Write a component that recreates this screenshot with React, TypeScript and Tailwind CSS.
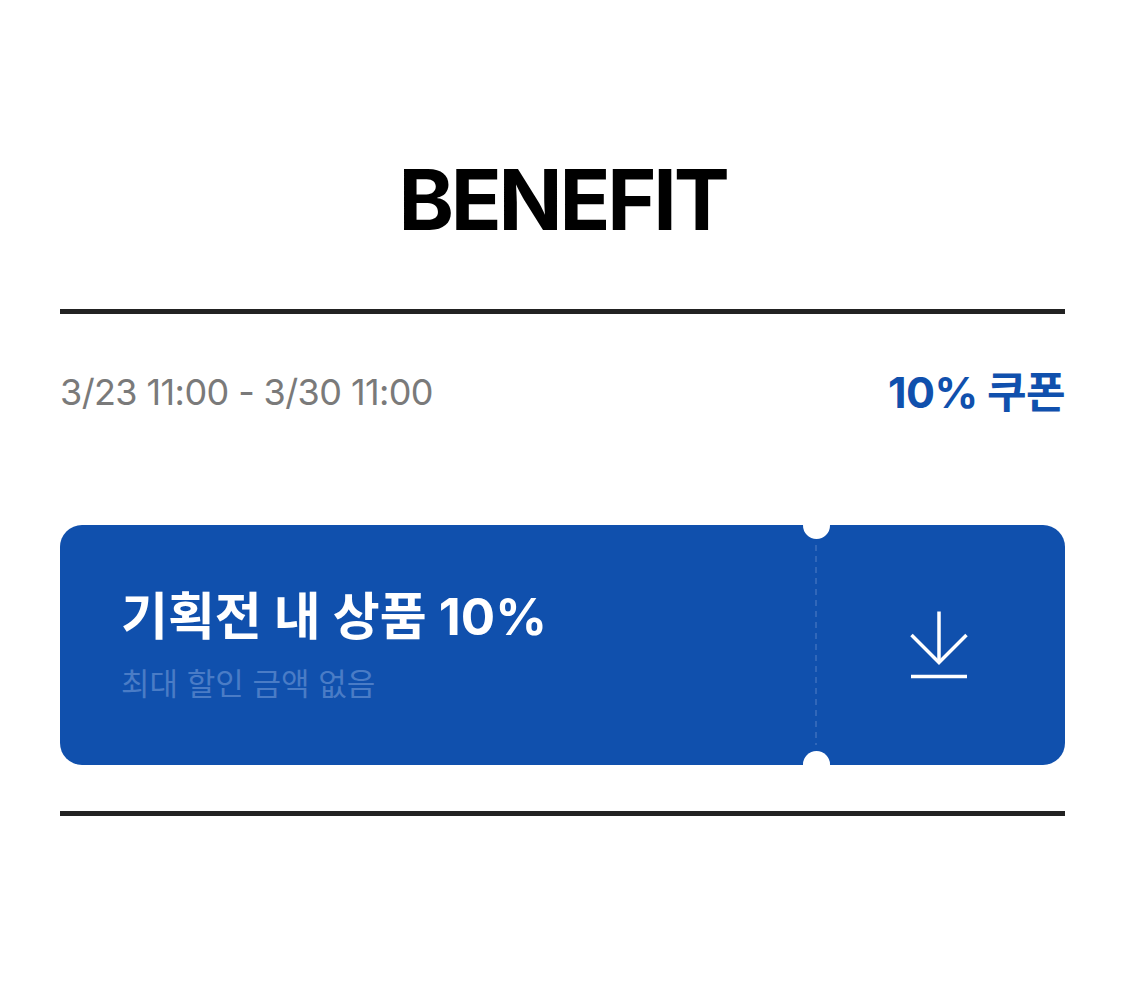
import React from "react";

export default function App() {
  return (
    <div className="w-[1125px] h-[981px] bg-white px-[60px] pt-[150px]" style={{ fontFamily: "Inter, 'Noto Sans CJK KR', sans-serif" }}>
      <h1 className="text-center text-[84px] leading-[100px] font-bold text-black tracking-[-3.2px]">BENEFIT</h1>
      <div className="mt-[59px] h-[5px] bg-[#222222]" />
      <div className="mt-[58px] flex items-center justify-between">
        <span className="text-[36px] leading-[40px] text-[#7a7a7a] tracking-[-0.6px]">3/23 11:00 - 3/30 11:00</span>
        <span className="text-[43px] leading-[40px] font-bold text-[#1050ad] tracking-[-0.6px]">10% 쿠폰</span>
      </div>
      <div className="relative mt-[113px] h-[240px] flex rounded-[22px] bg-[#1050ad]">
        <div className="flex-1 flex flex-col justify-center pl-[61px]">
          <div className="text-[51px] leading-[60px] font-bold text-white tracking-[0px]">기획전 내 상품 10%</div>
          <div className="mt-[17px] text-[31px] leading-[40px] text-[#4a7cc6]">최대 할인 금액 없음</div>
        </div>
        <div className="relative w-0 flex flex-col items-center">
          <div className="absolute top-[-13px] w-[27px] h-[27px] rounded-full bg-white" />
          <div className="mt-[20px] h-[200px] w-[2px] shrink-0 bg-[repeating-linear-gradient(to_bottom,#3167b9_0px,#3167b9_6px,transparent_6px,transparent_11px)]" />
          <div className="absolute bottom-[-13px] w-[27px] h-[27px] rounded-full bg-white" />
        </div>
        <div className="w-[249px] flex items-center justify-center pr-[3px]">
          <svg width="60" height="70" viewBox="0 0 60 70" fill="none" stroke="white" strokeWidth="3.5">
            <path d="M30 1.5 V52" />
            <path d="M2.5 25 L30 52.5 L57.5 25" />
            <path d="M2 66.5 H58" />
          </svg>
        </div>
      </div>
      <div className="mt-[46px] h-[5px] bg-[#222222]" />
    </div>
  );
}
